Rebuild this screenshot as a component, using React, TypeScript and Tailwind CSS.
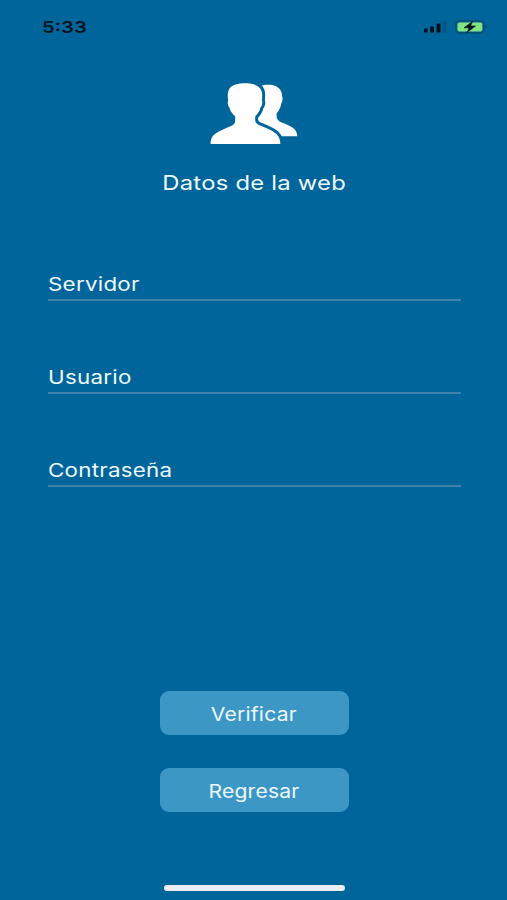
function StatusBar() {
  return (
    <header className="flex h-[54px] items-start justify-between pl-[41.5px] pr-[18px] pt-[16px]">
      <span className="origin-left scale-x-[1.22] text-[16.5px] font-semibold leading-[22px] text-[#03131f]">5:33</span>
      <div className="flex items-center gap-[8px] pt-[4px]">
        <svg width="23" height="12" viewBox="0 0 23 12" aria-label="signal">
          <rect x="0" y="7.5" width="3.6" height="4" rx=".6" fill="#04121d" />
          <rect x="6.2" y="5.5" width="3.8" height="6" rx=".6" fill="#04121d" />
          <rect x="12.5" y="2.5" width="4" height="9" rx=".6" fill="#04121d" />
          <rect x="18.6" y="0" width="4" height="11.5" rx=".6" fill="#075583" />
        </svg>
        <svg width="34" height="14" viewBox="0 0 34 14" aria-label="battery">
          <rect x="0.8" y="0.8" width="28" height="12.2" rx="3.5" fill="none" stroke="#064b70" strokeWidth="1.3" />
          <rect x="2.5" y="2.4" width="24.8" height="9" rx="1.8" fill="#83e47f" />
          <path d="M30.3 4.2q2.8 2.7 0 5.4z" fill="#064b70" />
          <path d="M17.6 1.4L9 7.8h5.1l-2.2 4.8L20.6 6h-5z" fill="#04121d" stroke="#04121d" strokeWidth=".6" />
        </svg>
      </div>
    </header>
  );
}

function UsersIcon() {
  return (
    <svg width="90" height="64" viewBox="0 0 90 64" fill="#fff" aria-label="users" className="mr-px">
      <path d="M50 55.3V6C54 4 58 3.5 62 3.8C69 4.3 74 8 74.2 15.5C75 17.5 74.6 20.5 73.4 22C72.8 26 71.5 29 68.6 32.5V35.5C69 39.5 72 41 76.5 42.5C81 44.3 85 46.3 87.2 49C88.6 50.8 89.2 52.8 89.2 55.3Z" />
      <path
        d="M2.5 63C2.6 59 3.5 56.5 5.5 54.3C9 50.6 17 47.7 23 45C26.5 43.3 27.3 41.5 27.2 39V35.5C24 32.5 22 29.8 21.4 26.5C19.8 24.8 19.2 21.3 20.2 19.2C19.4 15 19.6 11 21.2 8C24 3.8 30 2.3 37.2 2.3C47 2.3 54 5.5 54.2 13.5C54.2 15.5 54 17.3 53.8 19.2C54.8 21.3 54.2 24.8 52.4 26.5C51.9 29.8 50 32.5 47.2 35.5V39C47.2 41.5 48.5 43 51.5 44.2C58 46.8 64.5 49.2 68.5 53C71.4 56 72.3 59 72.4 63Z"
        stroke="#00659b"
        strokeWidth="6"
        paintOrder="stroke"
      />
    </svg>
  );
}

function Field({ label }: { label: string }) {
  return (
    <label className="flex h-[32px] flex-col">
      <span className="h-[30px] origin-left scale-x-[1.21] self-start text-[18.5px] leading-[30px] tracking-[0.2px]">{label}</span>
      <span className="h-[2px] bg-[#3d84a8]" />
    </label>
  );
}

function Action({ label }: { label: string }) {
  return (
    <button className="flex h-[44px] w-[189px] items-center justify-center rounded-[9px] bg-[#3d97c5]">
      <span className="scale-x-[1.14] pt-px text-[18.5px] leading-[26px] tracking-[0.2px]">{label}</span>
    </button>
  );
}

export default function App() {
  return (
    <main className="flex h-[900px] w-[507px] flex-col overflow-hidden bg-[#00659b] font-['Inter',sans-serif] text-[#eefaff]">
      <StatusBar />
      <section className="flex flex-col items-center pt-[27px]">
        <UsersIcon />
        <h1 className="ml-px mt-[23px] scale-x-[1.19] text-[20px] font-normal leading-[30px] tracking-[0.2px]">Datos de la web</h1>
      </section>
      <form className="ml-[48px] mt-[71px] flex w-[413px] flex-col gap-[61px]">
        <Field label="Servidor" />
        <Field label="Usuario" />
        <Field label="Contraseña" />
      </form>
      <div className="ml-px mt-[204px] flex flex-col items-center gap-[33px]">
        <Action label="Verificar" />
        <Action label="Regresar" />
      </div>
      <div className="mb-[9px] ml-[164px] mt-auto h-[6px] w-[181px] rounded-full bg-[#ebeef8]" />
    </main>
  );
}
